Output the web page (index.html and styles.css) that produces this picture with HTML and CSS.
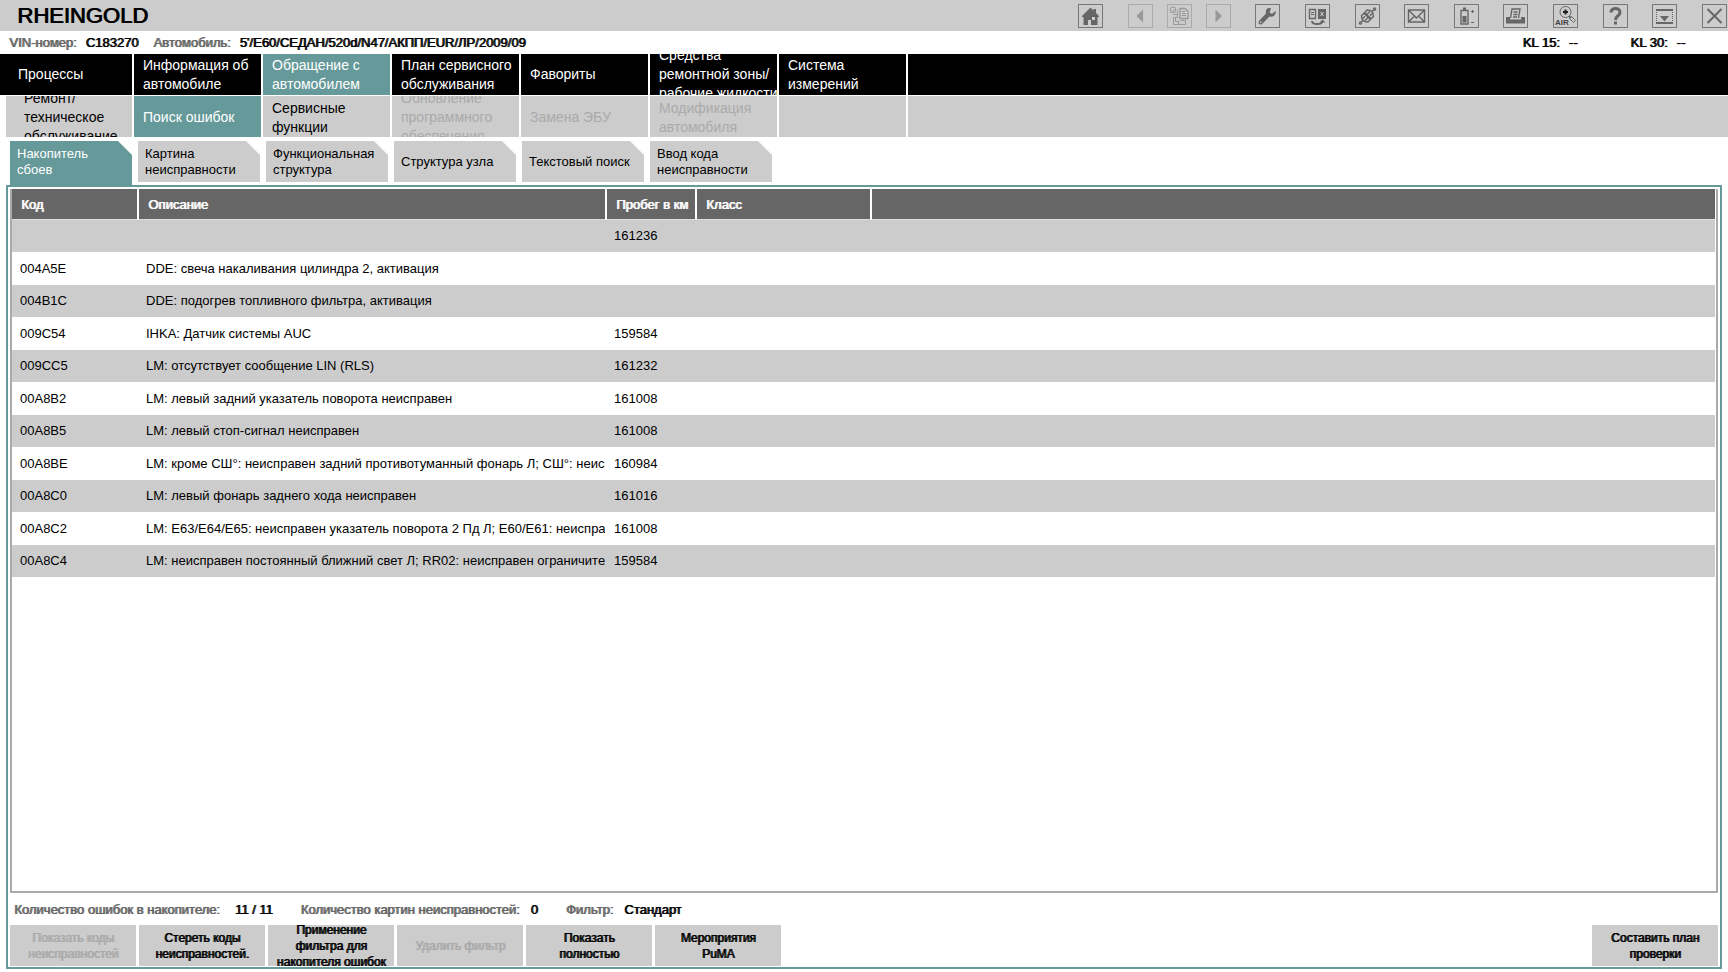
FILE: index.html
```
<!DOCTYPE html>
<html lang="ru">
<head>
<meta charset="utf-8">
<title>RHEINGOLD</title>
<link rel="stylesheet" href="styles.css">
</head>
<body>
<header class="topbar">
  <h1 class="brand">RHEINGOLD</h1>
  <div class="tools">
    <button class="tool" aria-label="Домой"><svg viewBox="0 0 25 24"><path class="fill" d="M4 12 12.500 3.500 15.500 6.500V5H18v4l3 3v1h-1.500v8H13v-5h-3v5H5.500v-8H4z"/><path class="hole" d="M14 13h3v3h-3z"/></svg></button>
    <div class="tool-group">
      <button class="tool" disabled aria-label="Назад"><svg viewBox="0 0 25 24"><path class="fill" d="M15 5.500v13l-6.500-6.500z"/></svg></button>
      <button class="tool" disabled aria-label="Документы"><svg viewBox="0 0 25 24"><circle cx="6" cy="6" r="3"/><path d="M4.500 6l1.500 1.500L9 4M10.500 6.500v4M6.500 10.500h4v3h-4v7h5M8.500 13.500v4h3M11.500 16.500v4h7v-4h-5"/><path class="medium" d="M13 4.500h5l3 3v7h-8z"/><path d="M15 7.500h3M15 9.500h4M15 11.500h4"/></svg></button>
      <button class="tool" disabled aria-label="Вперёд"><svg viewBox="0 0 25 24"><path class="fill" d="M9.500 5.500v13L16 12z"/></svg></button>
    </div>
    <button class="tool" aria-label="Настройки"><svg viewBox="0 0 25 24"><path class="fill" d="M20.500 7 17 10l-2.500-1.500L16 4.500c-3-1.500-6 1-5 5L4 17c-1.500 2.500 1 4.500 3 3l7.500-7.500c3.500 1 7-2 6-5.500z"/><path class="hole" d="M5 17.500h1.500V19H5z"/></svg></button>
    <button class="tool" aria-label="Обмен данными"><svg viewBox="0 0 25 24"><path class="medium" d="M4.500 5.500h6v9h-6z"/><path d="M6 8.500h3M6 10.500h3"/><path class="fill" d="M13 5h8v10h-8z"/><path class="light" d="M15.500 8l3 4M18.500 8l-3 4"/><path class="thick" d="M7 17c0 4 10.500 4 10.500 0"/><path class="fill" d="M14.500 18.500 17.500 15.500l3 3z"/></svg></button>
    <button class="tool" aria-label="Соединение"><svg viewBox="0 0 25 24"><g class="medium" transform="rotate(45 12.500 12)"><path d="M8 8q4.500-4.500 9 0v3.500H8zM8 12.500V16q4.500 4.500 9 0v-3.500zM11 7v4M14 13v4M14 7v3M11 14v3M12.500 5.500V3M12.500 18.500V21"/><circle cx="12.500" cy="2" r="1"/><circle cx="12.500" cy="22" r="1"/></g></svg></button>
    <button class="tool" aria-label="Почта"><svg viewBox="0 0 25 24"><path class="medium" d="M4.500 6h16v12h-16zM4.500 6l8 8 8-8M4.500 18l6-6M20.500 18l-6-6"/></svg></button>
    <button class="tool" aria-label="Аккумулятор"><svg viewBox="0 0 25 24"><path class="medium" d="M7 6.500h7v13.500H7z"/><path class="fill" d="M9 3.500h3V6H9zM8.500 12h4v6.500h-4z"/><path d="M17 7.500h3M18.500 6v3M17 18.500h3"/></svg></button>
    <button class="tool" aria-label="Печать"><svg viewBox="0 0 25 24"><path class="fill" d="M3 13h4v2.500h11V13h4v6.500H3z"/><path class="medium" d="M7.500 14 9 5h8l-1.500 9M10.500 8h4M10.500 10.500h4M10 13h4"/></svg></button>
    <button class="tool" aria-label="AIR"><svg viewBox="0 0 25 24"><circle cx="12.500" cy="8" r="5.500"/><path class="dark" d="M10 8h5M12.500 5.500v5"/><path class="thick" d="M16 12l2 2"/><path d="M16.500 14.500l2-2 4 4-2 2z"/><text x="2" y="21">AIR</text></svg></button>
    <button class="tool" aria-label="Справка"><svg viewBox="0 0 25 24"><path class="bold" d="M8 8.500c0-5.500 9-5.500 9 0 0 3.500-4.500 3-4.500 7.500"/><path class="fill" d="M11 17.500h3v3h-3z"/></svg></button>
    <button class="tool" aria-label="Свернуть"><svg viewBox="0 0 25 24"><path class="thick" d="M4 6h17M4 19h17"/><path class="dots" d="M4.500 8v10M20.500 8v10"/><path class="fill" d="M8 12h9l-4.500 5.500z"/></svg></button>
    <button class="tool" aria-label="Закрыть"><svg viewBox="0 0 25 24"><path class="thick" d="M5.500 5l14 14M19.500 5l-14 14"/></svg></button>
  </div>
</header>

<section class="vehicle heavy">
  <span class="muted">VIN-номер:</span><span class="vin">C183270</span>
  <span class="muted">Автомобиль:</span><span class="car">5'/E60/СЕДАН/520d/N47/АКПП/EUR/ЛР/2009/09</span>
  <span class="terminal">KL 15:<span>--</span></span>
  <span class="terminal">KL 30:<span>--</span></span>
</section>

<nav class="menu menu-main">
  <button class="cell wide-pad"><span>Процессы</span></button>
  <button class="cell"><span>Информация об<br>автомобиле</span></button>
  <button class="cell active"><span>Обращение с<br>автомобилем</span></button>
  <button class="cell"><span>План сервисного<br>обслуживания</span></button>
  <button class="cell"><span>Фавориты</span></button>
  <button class="cell"><span>Средства<br>ремонтной зоны/<br>рабочие жидкости</span></button>
  <button class="cell"><span>Система<br>измерений</span></button>
  <div class="cell"></div>
</nav>
<nav class="menu menu-sub">
  <button class="cell wide-pad"><span>Ремонт/<br>техническое<br>обслуживание</span></button>
  <button class="cell active"><span>Поиск ошибок</span></button>
  <button class="cell"><span>Сервисные<br>функции</span></button>
  <button class="cell" disabled><span>Обновление<br>программного<br>обеспечения</span></button>
  <button class="cell" disabled><span>Замена ЭБУ</span></button>
  <button class="cell" disabled><span>Модификация<br>автомобиля</span></button>
  <div class="cell"></div>
  <div class="cell"></div>
</nav>
<nav class="tabs">
  <button class="tab active">Накопитель<br>сбоев</button>
  <button class="tab">Картина<br>неисправности</button>
  <button class="tab">Функциональная<br>структура</button>
  <button class="tab">Структура узла</button>
  <button class="tab">Текстовый поиск</button>
  <button class="tab">Ввод кода<br>неисправности</button>
</nav>

<main class="panel">
  <div class="list">
    <table class="faults">
      <colgroup><col class="c-code"><col class="c-desc"><col class="c-km"><col class="c-class"><col></colgroup>
      <thead><tr><th>Код</th><th>Описание</th><th>Пробег в км</th><th>Класс</th><th></th></tr></thead>
      <tbody>
        <tr><td></td><td></td><td>161236</td><td></td><td></td></tr>
        <tr><td>004A5E</td><td>DDE: свеча накаливания цилиндра 2, активация</td><td></td><td></td><td></td></tr>
        <tr><td>004B1C</td><td>DDE: подогрев топливного фильтра, активация</td><td></td><td></td><td></td></tr>
        <tr><td>009C54</td><td>IHKA: Датчик системы AUC</td><td>159584</td><td></td><td></td></tr>
        <tr><td>009CC5</td><td>LM: отсутствует сообщение LIN (RLS)</td><td>161232</td><td></td><td></td></tr>
        <tr><td>00A8B2</td><td>LM: левый задний указатель поворота неисправен</td><td>161008</td><td></td><td></td></tr>
        <tr><td>00A8B5</td><td>LM: левый стоп-сигнал неисправен</td><td>161008</td><td></td><td></td></tr>
        <tr><td>00A8BE</td><td>LM: кроме СШ°: неисправен задний противотуманный фонарь Л; СШ°: неиспр</td><td>160984</td><td></td><td></td></tr>
        <tr><td>00A8C0</td><td>LM: левый фонарь заднего хода неисправен</td><td>161016</td><td></td><td></td></tr>
        <tr><td>00A8C2</td><td>LM: E63/E64/E65: неисправен указатель поворота 2 Пд Л; E60/E61: неисправе</td><td>161008</td><td></td><td></td></tr>
        <tr><td>00A8C4</td><td>LM: неисправен постоянный ближний свет Л; RR02: неисправен ограничитель</td><td>159584</td><td></td><td></td></tr>
      </tbody>
    </table>
  </div>
  <div class="summary heavy">
    <span class="pair"><span class="muted">Количество ошибок в накопителе:</span><span class="count">11 / 11</span></span>
    <span class="pair"><span class="muted">Количество картин неисправностей:</span><span>0</span></span>
    <span class="pair"><span class="muted">Фильтр:</span><span>Стандарт</span></span>
  </div>
  <div class="actions heavy">
    <button class="action" disabled><span>Показать коды<br>неисправностей</span></button>
    <button class="action"><span>Стереть коды<br>неисправностей.</span></button>
    <button class="action"><span>Применение<br>фильтра для<br>накопителя ошибок</span></button>
    <button class="action" disabled><span>Удалить фильтр</span></button>
    <button class="action"><span>Показать<br>полностью</span></button>
    <button class="action"><span>Мероприятия<br>PuMA</span></button>
    <button class="action last"><span>Составить план<br>проверки</span></button>
  </div>
</main>
</body>
</html>
```
FILE: styles.css
```
* { box-sizing: border-box; }

body {
  margin: 0;
  min-height: 100vh;
  display: flex;
  flex-direction: column;
  background: #fff;
  color: #000;
  font: 13px/16px "Liberation Sans", Arial, sans-serif;
}

button {
  margin: 0;
  padding: 0;
  border: 0;
  border-radius: 0;
  color: inherit;
  background: #ccc;
  font: inherit;
  text-align: left;
}

.heavy { text-shadow: 1px 0 0 currentColor; }
.muted { color: #666; }

/* Top bar */
.topbar {
  display: flex;
  justify-content: space-between;
  align-items: center;
  height: 31px;
  padding: 0 1px 0 17px;
  background: #ccc;
}
.brand {
  margin: 0;
  font-size: 22px;
  line-height: 30px;
  font-weight: 400;
  text-shadow: 1px 0 0 currentColor;
}
.tools {
  display: flex;
  justify-content: space-between;
  width: 649px;
}
.tool-group { display: flex; gap: 14px; }
.tool {
  width: 25px;
  height: 24px;
  box-shadow: inset 0 0 0 1px #777;
  background: transparent;
  color: #666;
}
.tool:disabled { color: #999; box-shadow: inset 0 0 0 1px #aaa; }
.tool svg {
  display: block;
  width: 100%;
  height: 100%;
  fill: none;
  stroke: currentColor;
  stroke-width: 1;
}
.tool .fill { fill: currentColor; stroke: none; }
.tool .hole { fill: #ccc; stroke: none; }
.tool .light { stroke: #ccc; }
.tool .dark { stroke: #222; stroke-width: 2; }
.tool .medium { stroke-width: 1.4; }
.tool .thick { stroke-width: 2; }
.tool .bold { stroke-width: 3; }
.tool .dots { stroke-dasharray: 1 1; }
.tool text {
  fill: #444;
  stroke: none;
  font-size: 8px;
  font-weight: 700;
}

/* Vehicle line */
.vehicle {
  display: flex;
  align-items: center;
  height: 23px;
  padding: 1px 43px 0 9px;
}
.vin { margin: 0 15px 0 9px; }
.car { margin: 0 auto 0 9px; }
.terminal { display: flex; gap: 9px; }
.terminal + .terminal { margin-left: 53px; }

/* Menus */
.menu {
  display: flex;
  gap: 2px;
  height: 41px;
  font-size: 14px;
  line-height: 19px;
}
.cell {
  display: flex;
  align-items: center;
  flex: 0 0 127px;
  padding-left: 9px;
  overflow: hidden;
  white-space: nowrap;
}
.cell:last-child { flex: 1; }
.wide-pad { padding-left: 18px; }
.menu-main .cell { background: #000; color: #fff; }
.menu-main .cell:first-child { flex-basis: 132px; }
.menu-sub { margin: 1px 0 0 6px; }
.menu-sub .cell { padding-top: 2px; background: #ccc; }
.menu-sub .cell:first-child { flex-basis: 126px; }
.menu .active { background: #699; color: #fff; }
.menu .cell:disabled { color: #aaa; }

/* Tabs */
.tabs {
  display: flex;
  gap: 6px;
  padding: 4px 0 0 10px;
  height: 48px;
}
.tab {
  width: 122px;
  height: 41px;
  padding: 1px 0 0 7px;
  white-space: nowrap;
  clip-path: polygon(0 0, calc(100% - 14px) 0, 100% 14px, 100% 100%, 0 100%);
}
.tab.active {
  height: 44px;
  padding-bottom: 3px;
  background: #699;
  color: #fff;
}

/* Panel */
.panel {
  flex: 1;
  display: flex;
  flex-direction: column;
  margin: 0 6px 3px 6px;
  padding: 2px 2px 1px;
  border: 2px solid #699;
}
.list {
  flex: 1;
  border: 2px solid #aaa;
  border-top-width: 0;
}
.faults {
  width: 100%;
  table-layout: fixed;
  border-collapse: separate;
  border-spacing: 0;
  padding-right: 1px;
}
.c-code { width: 127px; }
.c-desc { width: 468px; }
.c-km { width: 90px; }
.c-class { width: 175px; }
.faults th {
  height: 31px;
  padding: 1px 0 0 9px;
  border: 0 solid #fff;
  border-right-width: 2px;
  border-bottom: 1px solid #ddd;
  background: #666;
  color: #fff;
  font-weight: 400;
  text-align: left;
  text-shadow: 1px 0 0 currentColor;
  white-space: nowrap;
}
.faults th:last-child { border-right-width: 0; }
.faults td {
  height: 33px;
  padding: 0 0 0 7px;
  white-space: nowrap;
  overflow: hidden;
  border-right: 2px solid transparent;
}
.faults td:first-child { padding-left: 8px; }
.faults tr:nth-child(odd) td { height: 32px; background: #ccc; }

/* Summary and actions */
.summary {
  display: flex;
  gap: 28px;
  padding: 9px 4px 7px;
}
.pair { display: flex; gap: 11px; }
.count { margin-left: 4px; }
.actions {
  display: flex;
  gap: 3px;
  font-size: 12px;
}
.action {
  display: flex;
  align-items: center;
  justify-content: center;
  width: 126px;
  height: 41px;
  overflow: hidden;
  text-align: center;
  text-shadow: inherit;
  white-space: nowrap;
}
.action:disabled { color: #aaa; }
.last { margin-left: auto; }
```
